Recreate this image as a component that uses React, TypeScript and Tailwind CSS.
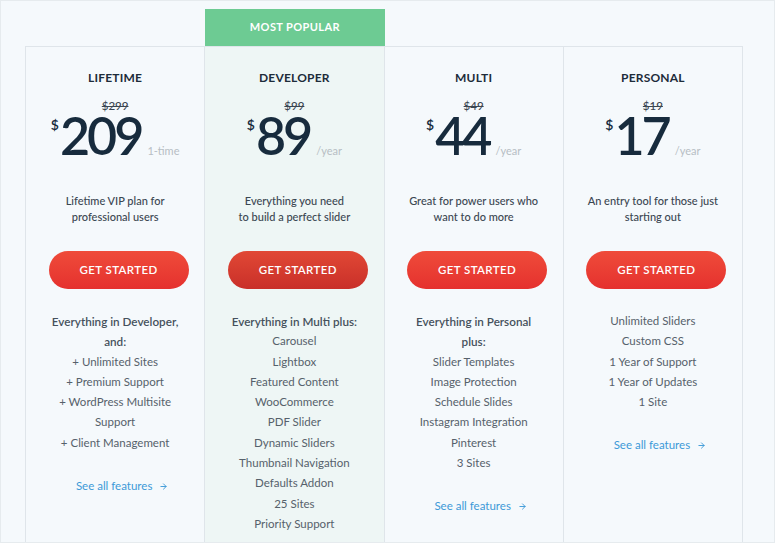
import { ArrowRight } from "lucide-react";

type Plan = {
  name: string;
  oldPrice: string;
  price: string;
  per: string;
  desc: string[];
  head: string[];
  items: string[][];
  popular?: boolean;
};

const plans: Plan[] = [
  {
    name: "LIFETIME",
    oldPrice: "$299",
    price: "209",
    per: "1-time",
    desc: ["Lifetime VIP plan for", "professional users"],
    head: ["Everything in Developer,", "and:"],
    items: [["+ Unlimited Sites"], ["+ Premium Support"], ["+ WordPress Multisite", "Support"], ["+ Client Management"]],
  },
  {
    name: "DEVELOPER",
    oldPrice: "$99",
    price: "89",
    per: "/year",
    desc: ["Everything you need", "to build a perfect slider"],
    head: ["Everything in Multi plus:"],
    items: [
      ["Carousel"],
      ["Lightbox"],
      ["Featured Content"],
      ["WooCommerce"],
      ["PDF Slider"],
      ["Dynamic Sliders"],
      ["Thumbnail Navigation"],
      ["Defaults Addon"],
      ["25 Sites"],
      ["Priority Support"],
    ],
    popular: true,
  },
  {
    name: "MULTI",
    oldPrice: "$49",
    price: "44",
    per: "/year",
    desc: ["Great for power users who", "want to do more"],
    head: ["Everything in Personal", "plus:"],
    items: [
      ["Slider Templates"],
      ["Image Protection"],
      ["Schedule Slides"],
      ["Instagram Integration"],
      ["Pinterest"],
      ["3 Sites"],
    ],
  },
  {
    name: "PERSONAL",
    oldPrice: "$19",
    price: "17",
    per: "/year",
    desc: ["An entry tool for those just", "starting out"],
    head: [],
    items: [["Unlimited Sliders"], ["Custom CSS"], ["1 Year of Support"], ["1 Year of Updates"], ["1 Site"]],
  },
];

const PlanColumn = ({ plan }: { plan: Plan }) => (
  <div
    className={
      "flex flex-col items-center border-r border-[#dfe5ea] pt-[23px] text-center " +
      (plan.popular ? "bg-[#eef6f5]" : "")
    }
  >
    <h2 className="text-[12px] font-bold leading-[16px] tracking-[0.2px] text-[#1d2c3a]">{plan.name}</h2>
    <p className="mt-[14px] text-[11.5px] font-medium leading-[12px] text-[#3b4651] line-through">{plan.oldPrice}</p>
    <div className="-mt-[1px] flex items-baseline">
      <span className="mr-[1px] self-start pt-[7px] text-[14px] font-semibold leading-[14px] text-[#172b3d]">$</span>
      <span className="text-[52px] font-semibold leading-[48px] tracking-[-3px] text-[#172b3d]">{plan.price}</span>
      <span className="ml-[6px] text-[11px] leading-[14px] text-[#b7bec4]">{plan.per}</span>
    </div>
    <p className="mt-[34px] text-[11px] font-medium leading-[16px] text-[#3b4752]">
      {plan.desc.map((line) => (
        <span key={line} className="block whitespace-nowrap">
          {line}
        </span>
      ))}
    </p>
    <button
      type="button"
      className={
        "mt-[26px] ml-[7px] h-[38px] w-[140px] rounded-full text-[11.5px] font-semibold tracking-[0.4px] text-white " +
        (plan.popular
          ? "bg-gradient-to-b from-[#e14835] to-[#c92f29]"
          : "bg-gradient-to-b from-[#ef4b3a] to-[#e5302e]")
      }
    >
      GET STARTED
    </button>
    <ul className="mt-[22px] text-[11.5px] leading-[20.3px] text-[#56616b]">
      {plan.head.length > 0 ? (
        <li className="text-[11.7px] font-semibold text-[#45515c]">
          {plan.head.map((line) => (
            <span key={line} className="block whitespace-nowrap">
              {line}
            </span>
          ))}
        </li>
      ) : null}
      {plan.items.map((item) => (
        <li key={item[0]}>
          {item.map((line) => (
            <span key={line} className="block whitespace-nowrap">
              {line}
            </span>
          ))}
        </li>
      ))}
    </ul>
    <a href="#" className="mt-[26px] ml-[14px] flex items-center gap-[7px] text-[11.5px] leading-[14px] text-[#3d9ad8]">
      See all features
      <ArrowRight size={9} strokeWidth={2.5} />
    </a>
  </div>
);

export default function App() {
  return (
    <div className="h-[543px] w-[775px] overflow-hidden border border-[#e6ebee] bg-[#f5f9fc] font-['Lato',sans-serif]">
      <div className="pl-[24px] pt-[8px]">
        <div className="grid w-[718px] grid-cols-4 pl-[1px]">
          <div />
          <div className="flex h-[37px] items-center justify-center bg-[#6dcb93] text-[11px] font-bold tracking-[0.4px] text-white">
            MOST POPULAR
          </div>
        </div>
        <div className="grid w-[718px] grid-cols-4 border-l border-t border-[#dfe5ea]">
          {plans.map((plan) => (
            <PlanColumn key={plan.name} plan={plan} />
          ))}
        </div>
      </div>
    </div>
  );
}
